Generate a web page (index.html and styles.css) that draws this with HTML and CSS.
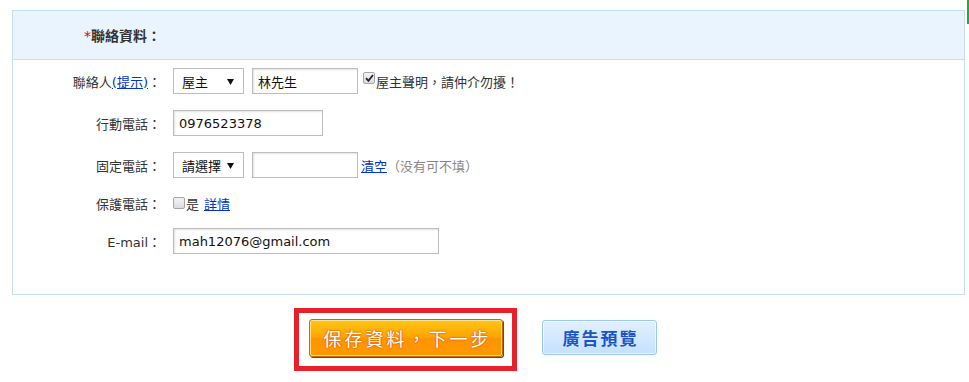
FILE: index.html
```html
<!DOCTYPE html>
<html lang="zh-Hant">
<head>
    <meta charset="UTF-8">
    <title>聯絡資料</title>
    <link rel="stylesheet" href="styles.css">
</head>
<body>

    <div class="edge-mark"></div>

    <div class="panel">
        <div class="panel-head">
            <div class="label head-label"><span class="req">*</span>聯絡資料：</div>
        </div>

        <div class="panel-body">
            <div class="row">
                <div class="label">聯絡人<a href="#">(提示)</a>：</div>
                <div class="field">
                    <div class="sel sel-short">
                        <span>屋主</span>
                        <svg class="arrow" width="7" height="6" viewBox="0 0 7 6"><path d="M0 0h7L3.5 6z" fill="#111"/></svg>
                    </div>
                    <input class="txt txt-name" type="text" value="林先生">
                    <span class="cb checked">
                        <svg width="9" height="8" viewBox="0 0 9 8"><path d="M1 4.2l2.4 2.6L8 1" fill="none" stroke="#222" stroke-width="1.8"/></svg>
                    </span>
                    <span class="note">屋主聲明，請仲介勿擾！</span>
                </div>
            </div>

            <div class="row">
                <div class="label">行動電話：</div>
                <div class="field">
                    <input class="txt txt-phone" type="text" value="0976523378">
                </div>
            </div>

            <div class="row">
                <div class="label">固定電話：</div>
                <div class="field">
                    <div class="sel sel-short">
                        <span>請選擇</span>
                        <svg class="arrow" width="7" height="6" viewBox="0 0 7 6"><path d="M0 0h7L3.5 6z" fill="#111"/></svg>
                    </div>
                    <input class="txt txt-name" type="text" value="">
                    <a href="#" class="clear-link">清空</a>
                    <span class="hint">（没有可不填）</span>
                </div>
            </div>

            <div class="row row-small">
                <div class="label">保護電話：</div>
                <div class="field">
                    <span class="cb"></span>
                    <span class="note">是</span>
                    <a href="#" class="detail-link">詳情</a>
                </div>
            </div>

            <div class="row">
                <div class="label">E-mail：</div>
                <div class="field">
                    <input class="txt txt-mail" type="text" value="mah12076@gmail.com">
                </div>
            </div>
        </div>
    </div>

    <div class="actions">
        <div class="highlight">
            <button class="btn-save">保存資料，下一步</button>
        </div>
        <button class="btn-preview">廣告預覽</button>
    </div>

</body>
</html>
```

FILE: styles.css
```css
body {
    margin: 0;
    font-family: "DejaVu Sans", "Noto Sans CJK TC", sans-serif;
    font-size: 13px;
    color: #333;
    background: #fff;
    position: relative;
    height: 382px;
    overflow: hidden;
}

.edge-mark {
    position: absolute;
    right: 0;
    top: 0;
    width: 2px;
    height: 24px;
    background: #1fae2d;
}

.panel {
    margin: 10px 0 0 12px;
    width: 951px;
    border: 1px solid #c7ddf8;
}

.panel-head {
    height: 48px;
    background: #eaf4fe;
    border-bottom: 1px solid #c7ddf8;
    display: flex;
    align-items: center;
}

.label {
    width: 148px;
    flex-shrink: 0;
    text-align: right;
    font-family: "DejaVu Sans", "Noto Sans CJK TC", sans-serif;
}

.head-label {
    font-weight: bold;
    font-size: 14px;
    color: #333;
    font-family: "Noto Sans CJK TC", sans-serif;
}

.req {
    color: #e60000;
    font-weight: normal;
    font-family: "DejaVu Sans", sans-serif;
}

.label a {
    color: #0033cc;
}

.panel-body {
    padding: 8px 0 40px;
    display: flex;
    flex-direction: column;
    gap: 16px;
}

.row {
    display: flex;
    align-items: center;
    height: 26px;
}

.row-small {
    height: 18px;
}

.field {
    margin-left: 12px;
    display: flex;
    align-items: center;
}

.sel {
    box-sizing: border-box;
    height: 26px;
    border: 1px solid #bdbdbd;
    background: #fff;
    display: flex;
    align-items: center;
    justify-content: space-between;
    padding: 0 9px 0 8px;
    color: #111;
    font-family: "Noto Sans CJK TC", sans-serif;
}

.sel-short {
    width: 71px;
}

.arrow {
    margin-top: 1px;
}

.txt {
    box-sizing: border-box;
    height: 26px;
    border: 1px solid #bdbdbd;
    box-shadow: inset 1px 1px 2px rgba(0, 0, 0, 0.12);
    padding: 0 5px;
    font-family: "DejaVu Sans", "Noto Sans CJK TC", sans-serif;
    font-size: 13px;
    color: #111;
    outline: none;
    margin: 0;
}

.txt-name {
    width: 106px;
    margin-left: 8px;
}

.txt-phone {
    width: 150px;
}

.txt-mail {
    width: 266px;
}

.cb {
    box-sizing: border-box;
    width: 12px;
    height: 12px;
    border: 1px solid #a5a5a5;
    border-radius: 2px;
    background: linear-gradient(#f4f4f4, #dcdcdc);
    display: inline-flex;
    align-items: center;
    justify-content: center;
    margin-right: 1px;
}

.checked {
    margin-left: 5px;
    margin-top: -6px;
}

.note {
    font-family: "Noto Sans CJK TC", sans-serif;
    color: #333;
}

.clear-link {
    margin-left: 3px;
    color: #0033cc;
    font-family: "Noto Sans CJK TC", sans-serif;
}

.hint {
    color: #888;
    font-family: "Noto Sans CJK TC", sans-serif;
}

.detail-link {
    margin-left: 5px;
    color: #0033cc;
    font-family: "Noto Sans CJK TC", sans-serif;
}

.actions {
    display: flex;
    align-items: center;
    gap: 25px;
    padding-left: 294px;
    margin-top: 13px;
}

.highlight {
    border: 5px solid #e8202a;
    padding: 6px 9px 9px 10px;
    width: 194px;
}

.btn-save {
    width: 194px;
    height: 38px;
    border: 1px solid #c76a00;
    border-radius: 3px;
    background: linear-gradient(#ffc617 0%, #ffa400 48%, #ff9400 52%, #ff9a00 100%);
    box-shadow: inset 0 0 0 1px rgba(255, 232, 160, 0.85), 1px 1px 0 #4d4d4d;
    color: #fff;
    font-family: "Noto Sans CJK TC", sans-serif;
    font-size: 18px;
    letter-spacing: 3px;
    padding: 0 0 0 3px;
    text-shadow: 0 0 2px #e36a00, 0 0 2px #e36a00, 0 0 1px #d85f00;
    cursor: pointer;
}

.btn-preview {
    width: 115px;
    height: 35px;
    margin-top: -4px;
    border: 1px solid #9cc8f0;
    border-radius: 3px;
    background: linear-gradient(#e2f0ff, #c4e1ff);
    box-shadow: inset 0 0 0 1px rgba(255, 255, 255, 0.6);
    color: #1a55c6;
    font-family: "Noto Sans CJK TC", sans-serif;
    font-size: 17px;
    font-weight: bold;
    letter-spacing: 2px;
    padding: 0 0 0 2px;
    cursor: pointer;
}
```
